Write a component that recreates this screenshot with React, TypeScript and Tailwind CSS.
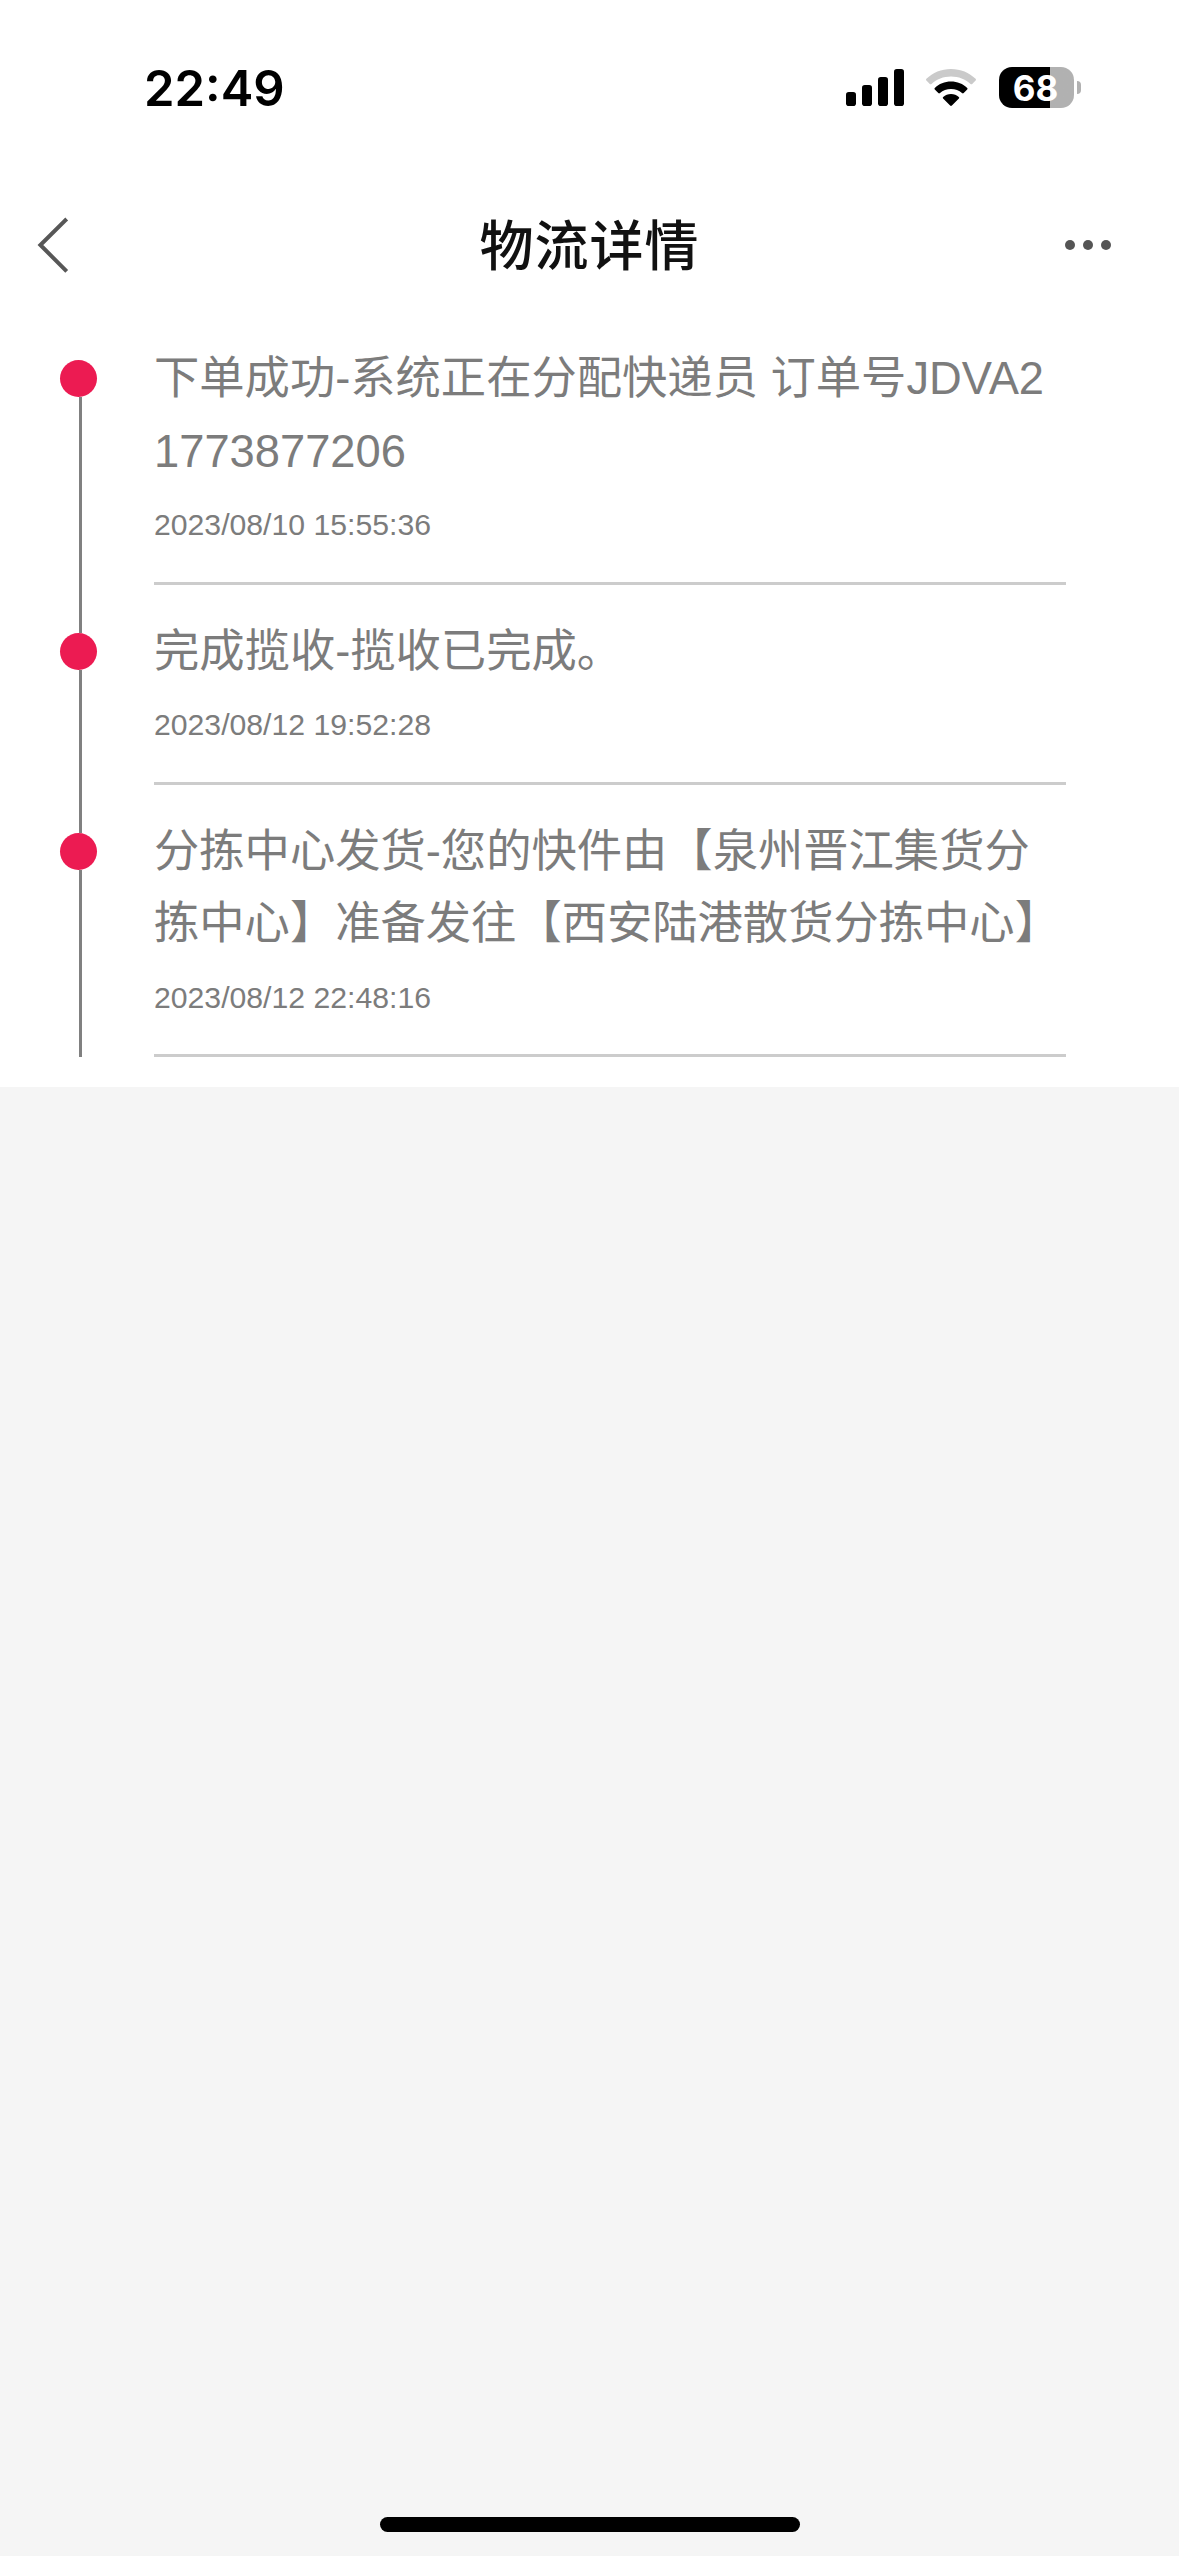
import React from "react";

interface TrackEvent {
  text: string;
  time: string;
}

const events: TrackEvent[] = [
  {
    text: "下单成功-系统正在分配快递员 订单号JDVA21773877206",
    time: "2023/08/10 15:55:36",
  },
  {
    text: "完成揽收-揽收已完成。",
    time: "2023/08/12 19:52:28",
  },
  {
    text: "分拣中心发货-您的快件由【泉州晋江集货分拣中心】准备发往【西安陆港散货分拣中心】",
    time: "2023/08/12 22:48:16",
  },
];

function SignalIcon() {
  return (
    <svg width="58" height="38" viewBox="0 0 58 38" fill="#000">
      <rect x="0" y="23" width="10" height="14" rx="2.8" />
      <rect x="16" y="16" width="10" height="21" rx="2.8" />
      <rect x="32" y="8" width="10" height="29" rx="2.8" />
      <rect x="48" y="0" width="10" height="37" rx="2.8" />
    </svg>
  );
}

function WifiIcon() {
  return (
    <svg width="50" height="38" viewBox="0 0 50 38">
      <path
        fill="#cacaca"
        d="M25 0C34.6 0 43.3 3.7 49.6 9.8Q50.4 10.6 49.6 11.5L46.2 14.9Q45.4 15.7 44.5 14.9C39.4 10.1 32.5 7.4 25 7.4S10.6 10.1 5.5 14.9Q4.6 15.7 3.8 14.9L.4 11.5Q-.4 10.6 .4 9.8C6.7 3.7 15.4 0 25 0Z"
      />
      <path
        fill="#000"
        d="M25 12.6C31.3 12.6 37 15 41.2 18.9Q42 19.8 41.2 20.6L37.7 24Q36.9 24.8 36 24C33.1 21.4 29.2 19.9 25 19.9S16.9 21.4 14 24Q13.1 24.8 12.3 24L8.8 20.6Q8 19.8 8.8 18.9C13 15 18.7 12.6 25 12.6Z"
      />
      <path
        fill="#000"
        d="M25 25C28 25 30.7 26.1 32.8 27.9Q33.7 28.7 32.9 29.5L25.9 36.5Q25 37.3 24.1 36.5L17.1 29.5Q16.3 28.7 17.2 27.9C19.3 26.1 22 25 25 25Z"
      />
    </svg>
  );
}

function Battery() {
  return (
    <div className="flex items-center gap-[3px]">
      <div className="flex h-[41px] w-[75px] items-center justify-center rounded-[13px] bg-linear-to-r from-black from-68% to-[#b1b1b1] to-68% pt-px pr-[2px] font-['Inter',sans-serif] text-[35px] leading-none font-bold text-white">
        68
      </div>
      <div className="h-[13px] w-[4px] rounded-r-full bg-[#b1b1b1]" />
    </div>
  );
}

function StatusBar() {
  return (
    <div className="flex h-[176px] items-start justify-between pr-[98px] pl-[144px]">
      <span className="mt-[59px] font-['Inter',sans-serif] text-[49px] leading-[60px] font-semibold text-black">
        22:49
      </span>
      <div className="mt-[67px] flex h-[41px] items-center">
        <SignalIcon />
        <div className="ml-[22px]">
          <WifiIcon />
        </div>
        <div className="ml-[23px]">
          <Battery />
        </div>
      </div>
    </div>
  );
}

function NavBar() {
  return (
    <div className="grid h-[136px] grid-cols-3 items-start">
      <svg className="mt-[41px] ml-[36px]" width="36" height="58" viewBox="0 0 36 58" fill="none">
        <path d="M29.3 3.4L4.4 28L29.3 53" stroke="#575757" strokeWidth="4" strokeLinecap="square" />
      </svg>
      <h1 className="mt-[31px] text-center text-[54px] leading-[80px] font-medium tracking-[1px] text-[#111]">
        物流详情
      </h1>
      <div className="mt-[64px] mr-[68px] flex justify-end gap-[8px]">
        <span className="size-[10px] rounded-full bg-[#555]" />
        <span className="size-[10px] rounded-full bg-[#555]" />
        <span className="size-[10px] rounded-full bg-[#555]" />
      </div>
    </div>
  );
}

function TimelineItem({ event, first }: { event: TrackEvent; first: boolean }) {
  return (
    <li className="flex">
      {/* Rail */}
      <div className="flex w-[154px] shrink-0 flex-col pl-[60px]">
        <div className={`ml-[19px] h-[48px] w-[3px] ${first ? "" : "bg-[#808080]"}`} />
        <div className="size-[37px] rounded-full bg-[#ec1b52]" />
        <div className="ml-[19px] w-[3px] flex-1 bg-[#808080]" />
      </div>

      <div className="w-[912px] border-b-3 border-[#cccccc] pt-[31px] pb-[32px] text-[#7c7c7c]">
        <p className="text-[45.3px] leading-[72.5px] break-all">{event.text}</p>
        <p className="mt-[13px] text-[30.2px] leading-[48.5px]">{event.time}</p>
      </div>
    </li>
  );
}

export default function App() {
  return (
    <div className="flex h-[2556px] w-[1179px] flex-col overflow-hidden bg-[#f5f5f5] font-['Liberation_Sans','Noto_Sans_CJK_SC',sans-serif]">
      <div className="bg-white pb-[30px]">
        <StatusBar />
        <NavBar />
        <ul>
          {events.map((event, i) => (
            <TimelineItem key={event.time} event={event} first={i === 0} />
          ))}
        </ul>
      </div>

      {/* Home indicator */}
      <div className="mx-auto mt-auto mb-[24px] h-[15px] w-[420px] rounded-full bg-black" />
    </div>
  );
}
